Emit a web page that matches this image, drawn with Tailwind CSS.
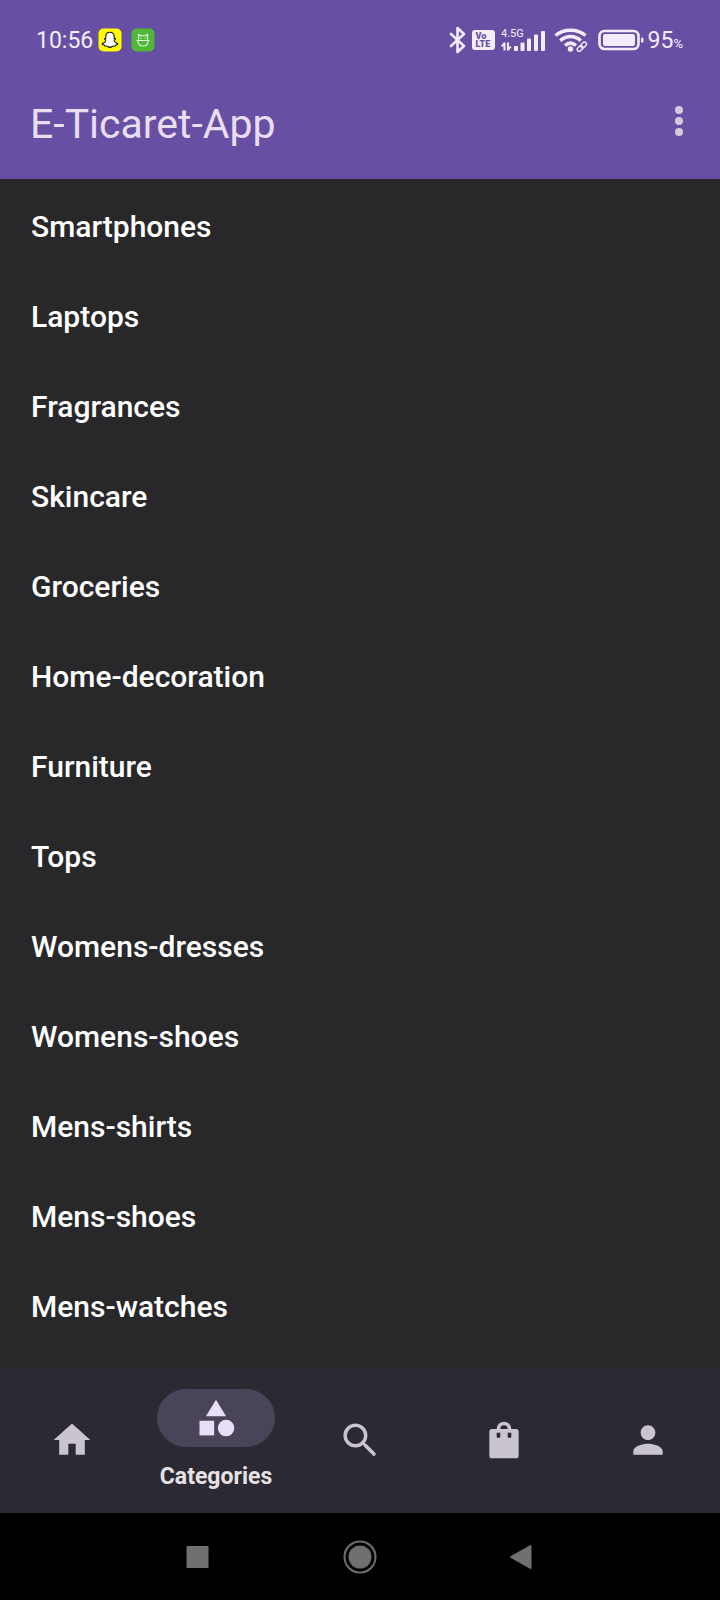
<!DOCTYPE html>
<html lang="en">
<head>
<meta charset="utf-8">
<meta name="viewport" content="width=device-width, initial-scale=1">
<title>E-Ticaret-App</title>
<script src="https://cdn.jsdelivr.net/npm/@tailwindcss/browser@4"></script>
</head>
<body class="flex min-h-screen flex-col bg-[#28282a] font-['Roboto',sans-serif] text-white">

<header class="bg-[#6750a4] pb-3">
  <!-- Status bar -->
  <div class="flex h-20 items-center justify-between pr-[37px] pl-9 text-[#f3edfb]">
    <div class="flex items-center">
      <time class="w-[62px] pt-0.5 text-[23px]">10:56</time>
      <svg class="size-6" viewBox="0 0 24 24" aria-label="Snapchat">
        <rect x=".5" y=".5" width="23" height="23" rx="5" fill="#fffc00"/>
        <path d="M12 4.200c-2.500 0-4.200 1.800-4.200 4.300v2c-.5.2-1.200-.3-1.400.2-.2.6 1 .9 1.300 1.400.2 1.200-1.600 3-3.400 3.500-.3.8 1 1.200 2 1.400.2.4.1.9.5 1 .7.1 1.500-.2 2.300.2.900.5 1.600 1.200 2.900 1.200s2-.7 2.900-1.200c.8-.4 1.600-.1 2.300-.2.4-.1.3-.6.5-1 1-.2 2.300-.6 2-1.400-1.800-.5-3.600-2.300-3.400-3.500.3-.5 1.500-.8 1.300-1.400-.2-.5-.9 0-1.400-.2v-2c0-2.500-1.700-4.300-4.200-4.300z" fill="#fff" stroke="#15150a" stroke-width="1.100" stroke-linejoin="round"/>
      </svg>
      <svg class="ml-[9px] size-6" viewBox="0 0 24 24" aria-label="Android app">
        <rect x=".5" y=".5" width="23" height="23" rx="5" fill="#4fb83a"/>
        <g fill="none" stroke="#e3f8dd" stroke-width="1.100" stroke-linecap="round" stroke-linejoin="round">
          <path d="M7.500 12V6.200l2 1.500h5l2-1.500V12M6 12.500h12M7 13c0 3.300 2 5 5 5s5-1.700 5-5"/>
          <path d="M10 10v.3M14 10v.3"/>
        </g>
      </svg>
    </div>
    <div class="flex items-center">
      <svg class="h-7 w-5" viewBox="0 0 20 28" fill="none" stroke="currentColor" stroke-width="2.600" stroke-linejoin="round" stroke-linecap="round" aria-label="Bluetooth">
        <path d="M3 8l13 12-6.500 6V2L16 8 3 20"/>
      </svg>
      <div class="ml-1 flex h-5 w-[23px] flex-col rounded-[3px] bg-[#f3edfb] pt-0.5 pl-1 text-[9px] leading-2 font-black text-[#6750a4]">
        <span>Vo</span><span>LTE</span>
      </div>
      <svg class="ml-1.5 h-6 w-[46px] font-['Roboto']" viewBox="0 0 46 24" fill="currentColor" aria-label="Signal 4.5G">
        <text x="0" y="9" font-size="11">4.5G</text>
        <path d="M3.500 14.500v8M.8 18.500l2.700-3.500M7 14.500v8M7 22l2.800-3.500" fill="none" stroke="currentColor" stroke-width="2"/>
        <rect x="13" y="18" width="4" height="5" rx="1"/>
        <rect x="19.500" y="14.500" width="4" height="8.500" rx="1"/>
        <rect x="26" y="10.500" width="4" height="12.500" rx="1"/>
        <rect x="33" y="6.500" width="4" height="16.500" rx="1"/>
        <rect x="40" y="3" width="4" height="20" rx="1"/>
      </svg>
      <svg class="ml-[7px] h-6 w-[34px]" viewBox="0 0 34 24" fill="none" stroke="currentColor" aria-label="Wi-Fi">
        <g stroke-width="3.500">
          <path d="M1.500 7.500c8-7 22-7 30 0"/>
          <path d="M6.300 12.700c6-5.500 14.500-5.500 20.500 0"/>
          <path d="M11 17.500c3.500-3 7.500-3 11 0"/>
        </g>
        <circle cx="16.500" cy="21" r="2.700" fill="currentColor" stroke="none"/>
        <g transform="rotate(-45 28 18.500)">
          <rect x="21.500" y="15.500" width="13" height="6" rx="3" stroke="#6750a4" stroke-width="3"/>
          <g stroke-width="1.400">
            <rect x="22" y="16.500" width="6.500" height="4" rx="2"/>
            <rect x="27" y="16.500" width="6.500" height="4" rx="2"/>
          </g>
        </g>
      </svg>
      <svg class="ml-2.5 h-6 w-[46px]" viewBox="0 0 46 24" fill="currentColor" aria-label="Battery 95%">
        <rect x="1.500" y="3" width="39" height="18" rx="5" fill="none" stroke="currentColor" stroke-width="2.600"/>
        <rect x="5" y="6" width="32" height="12" rx="2"/>
        <rect x="43" y="9.500" width="2.500" height="5" rx="1.200"/>
      </svg>
      <div class="ml-1 flex items-baseline pt-0.5"><span class="text-[23px]">95</span><span class="text-[13px]">%</span></div>
    </div>
  </div>

  <!-- App bar -->
  <div class="flex h-[87px] items-center justify-between pr-[13px] pl-[30px]">
    <h1 class="text-[41px] leading-[84px] text-[#e9ddf2]">E-Ticaret-App</h1>
    <button type="button" aria-label="More options" class="mb-1.5 flex size-14 items-center justify-center text-[#d6c9dd]">
      <svg class="h-8 w-8" viewBox="0 0 32 32" fill="currentColor"><circle cx="16" cy="5" r="4"/><circle cx="16" cy="16" r="4"/><circle cx="16" cy="27" r="4"/></svg>
    </button>
  </div>
</header>

<main class="flex-1 pt-[3px]">
  <ul class="text-[30px] font-medium">
    <li class="border-b border-[#272729]"><a href="#" class="flex h-[89px] items-center px-[31px]">Smartphones</a></li>
    <li class="border-b border-[#272729]"><a href="#" class="flex h-[89px] items-center px-[31px]">Laptops</a></li>
    <li class="border-b border-[#272729]"><a href="#" class="flex h-[89px] items-center px-[31px]">Fragrances</a></li>
    <li class="border-b border-[#272729]"><a href="#" class="flex h-[89px] items-center px-[31px]">Skincare</a></li>
    <li class="border-b border-[#272729]"><a href="#" class="flex h-[89px] items-center px-[31px]">Groceries</a></li>
    <li class="border-b border-[#272729]"><a href="#" class="flex h-[89px] items-center px-[31px]">Home-decoration</a></li>
    <li class="border-b border-[#272729]"><a href="#" class="flex h-[89px] items-center px-[31px]">Furniture</a></li>
    <li class="border-b border-[#272729]"><a href="#" class="flex h-[89px] items-center px-[31px]">Tops</a></li>
    <li class="border-b border-[#272729]"><a href="#" class="flex h-[89px] items-center px-[31px]">Womens-dresses</a></li>
    <li class="border-b border-[#272729]"><a href="#" class="flex h-[89px] items-center px-[31px]">Womens-shoes</a></li>
    <li class="border-b border-[#272729]"><a href="#" class="flex h-[89px] items-center px-[31px]">Mens-shirts</a></li>
    <li class="border-b border-[#272729]"><a href="#" class="flex h-[89px] items-center px-[31px]">Mens-shoes</a></li>
    <li class="border-b border-[#272729]"><a href="#" class="flex h-[89px] items-center px-[31px]">Mens-watches</a></li>
  </ul>
</main>

<!-- Tab bar -->
<nav aria-label="Main" class="grid h-[145px] grid-cols-5 bg-[#2b2931] text-[#cac4d0]">
  <a href="#" aria-label="Home" class="flex items-center justify-center pb-0.5">
    <svg class="size-11" viewBox="0 0 24 24" fill="currentColor"><path d="M10 20v-6h4v6h5v-8h3L12 3 2 12h3v8z"/></svg>
  </a>
  <a href="#" aria-current="page" class="flex flex-col items-center pt-[21px] text-[#e8def8]">
    <span class="flex h-[58px] w-[118px] items-center justify-center rounded-full bg-[#4a4458]">
      <svg class="size-11" viewBox="0 0 24 24" fill="currentColor"><path d="M12 2l-5.500 9h11z"/><circle cx="17.500" cy="17.500" r="4.500"/><path d="M3 13.500h8v8H3z"/></svg>
    </span>
    <span class="mt-4 text-[23px] leading-7 font-bold text-[#e6e1e5]">Categories</span>
  </a>
  <a href="#" aria-label="Search" class="flex items-center justify-center pb-0.5">
    <svg class="size-11" viewBox="0 0 24 24" fill="none" stroke="currentColor"><circle cx="9.500" cy="9.500" r="5.600" stroke-width="1.900"/><path d="M14 14l1.200 1.200" stroke-width="1.600"/><path d="M15.100 15.100l4.500 4.500" stroke-width="2" stroke-linecap="round"/></svg>
  </a>
  <a href="#" aria-label="Cart" class="flex items-center justify-center pb-0.5">
    <svg class="size-11" viewBox="0 0 24 24" fill="currentColor"><path fill-rule="evenodd" d="M8 6a4 4 0 0 1 8 0h2.600A1.400 1.400 0 0 1 20 7.400v13.200a1.400 1.400 0 0 1-1.400 1.400H5.400A1.400 1.400 0 0 1 4 20.600V7.400A1.400 1.400 0 0 1 5.400 6zM10 6h4a2 2 0 0 0-4 0zM8 8v2.200a.6.6 0 0 0 .6.6h.8a.6.6 0 0 0 .6-.6V8zM14 8v2.200a.6.6 0 0 0 .6.6h.8a.6.6 0 0 0 .6-.6V8z"/></svg>
  </a>
  <a href="#" aria-label="Profile" class="flex items-center justify-center pb-0.5">
    <svg class="size-11" viewBox="0 0 24 24" fill="currentColor"><path d="M12 12c2.210 0 4-1.790 4-4s-1.790-4-4-4-4 1.790-4 4 1.790 4 4 4zm0 2c-2.670 0-8 1.340-8 4v2h16v-2c0-2.660-5.330-4-8-4z"/></svg>
  </a>
</nav>

<!-- System navigation -->
<div class="flex h-[87px] items-center justify-center gap-[126px] bg-black text-[#707070]">
  <button type="button" aria-label="Recent apps"><svg class="size-9" viewBox="0 0 36 36" fill="currentColor"><rect x="6.500" y="7" width="22" height="22" rx="1"/></svg></button>
  <button type="button" aria-label="Home screen"><svg class="size-9" viewBox="0 0 36 36" fill="currentColor"><circle cx="18" cy="18" r="11.500"/><circle cx="18" cy="18" r="15.500" fill="none" stroke="currentColor" stroke-width="2"/></svg></button>
  <button type="button" aria-label="Back"><svg class="size-9" viewBox="0 0 36 36" fill="currentColor"><path d="M6.500 17.200L26 6.200q1.500-.6 1.500.8v22q0 1.400-1.500.8L6.500 18.800q-1.200-.8 0-1.600z"/></svg></button>
</div>
</body>
</html>
